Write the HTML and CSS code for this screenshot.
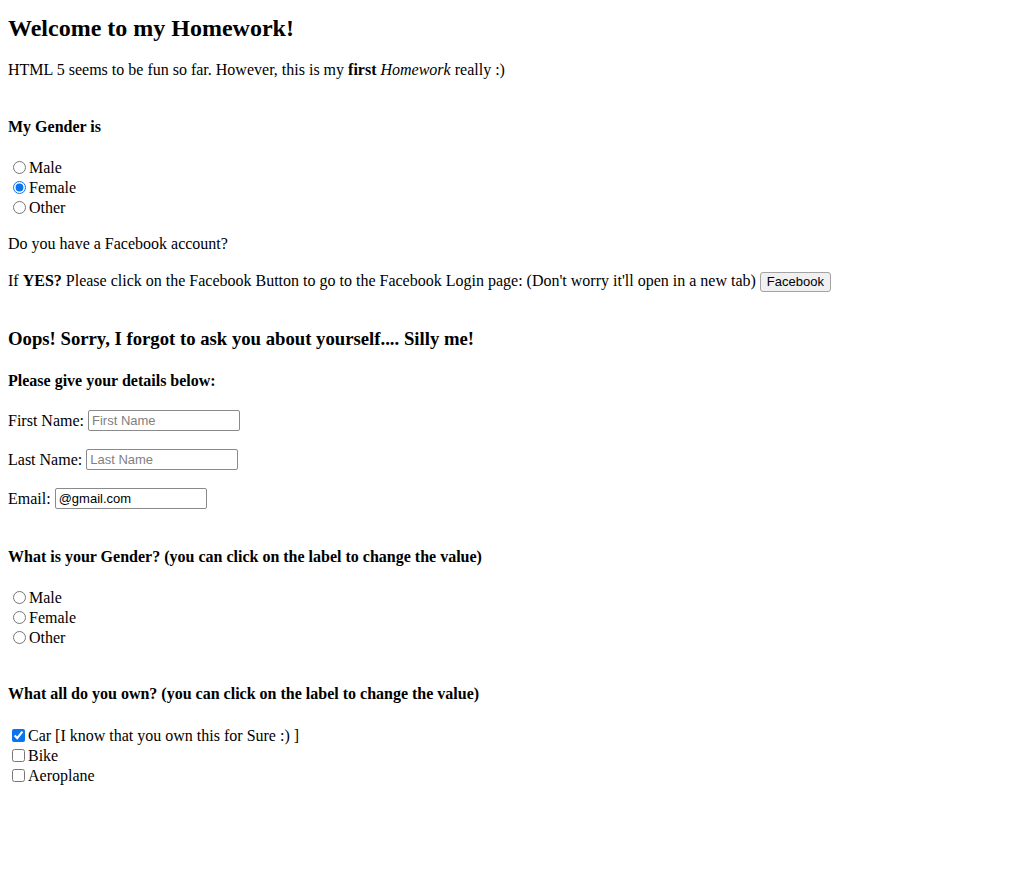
FILE: index.html
```html
<!DOCTYPE html>
<html lang="en">
<head>
<meta charset="utf-8">
<title>My Homework</title>
<link rel="stylesheet" href="styles.css">
</head>
<body>
<h1 class="title">Welcome to my Homework!</h1>
<p class="intro">HTML 5 seems to be fun so far. However, this is my <b>first</b> <i>Homework</i> really :)</p>

<h4 class="heading h-gender1">My Gender is</h4>
<div class="choices ch-gender1">
  <label class="choice"><input class="radio" type="radio" name="g1">Male</label>
  <label class="choice"><input class="radio" type="radio" name="g1" checked>Female</label>
  <label class="choice"><input class="radio" type="radio" name="g1">Other</label>
</div>

<p class="line fb-q">Do you have a Facebook account?</p>
<p class="line fb-line">If <b>YES?</b> Please click on the Facebook Button to go to the Facebook Login page: (Don't worry it'll open in a new tab) <button class="btn" type="button">Facebook</button></p>

<h3 class="subtitle">Oops! Sorry, I forgot to ask you about yourself.... Silly me!</h3>
<h4 class="heading h-details">Please give your details below:</h4>

<div class="field f-first">First Name: <input class="text" type="text" placeholder="First Name"></div>
<div class="field f-last">Last Name: <input class="text" type="text" placeholder="Last Name"></div>
<div class="field f-email">Email: <input class="text" type="email" value="@gmail.com"></div>

<h4 class="heading h-gender2">What is your Gender? (you can click on the label to change the value)</h4>
<div class="choices ch-gender2">
  <label class="choice"><input class="radio" type="radio" name="g2">Male</label>
  <label class="choice"><input class="radio" type="radio" name="g2">Female</label>
  <label class="choice"><input class="radio" type="radio" name="g2">Other</label>
</div>

<h4 class="heading h-own">What all do you own? (you can click on the label to change the value)</h4>
<div class="choices ch-own">
  <label class="choice"><input class="check" type="checkbox" checked>Car [I know that you own this for Sure :) ]</label>
  <label class="choice"><input class="check" type="checkbox">Bike</label>
  <label class="choice"><input class="check" type="checkbox">Aeroplane</label>
</div>
</body>
</html>
```

FILE: styles.css
```css
html, body {
  margin: 0;
  padding: 0;
  background: #ffffff;
}

body {
  padding: 1px 8px 0;
  font-family: "Liberation Serif", "Times New Roman", serif;
  font-size: 16px;
  line-height: 20px;
  color: #000000;
}

.title {
  margin: 13px 0 0;
  font-size: 24px;
  line-height: 28px;
  font-weight: bold;
}

.intro {
  margin: 18px 0 0;
}

.heading {
  margin: 0;
  font-size: 16px;
  font-weight: bold;
  line-height: 20px;
}

.h-gender1 { margin-top: 37px; }
.h-details { margin-top: 21px; }
.h-gender2 { margin-top: 38px; }
.h-own { margin-top: 36px; }

.choices {
  display: flex;
  flex-direction: column;
}

.ch-gender1 { margin-top: 21px; }
.ch-gender2 { margin-top: 21px; }
.ch-own { margin-top: 22px; }

.choice {
  display: flex;
  align-items: center;
  height: 20px;
  line-height: 20px;
  cursor: default;
}

.radio {
  width: 13px;
  height: 13px;
  margin: 0 3px 2px 5px;
  accent-color: #0a74f0;
}

.check {
  width: 13px;
  height: 13px;
  margin: 0 3px 2px 4px;
  accent-color: #0a74f0;
}

.line {
  margin: 0;
}

.fb-q { margin-top: 16px; }
.fb-line { margin-top: 17px; }

.btn {
  box-sizing: border-box;
  height: 20px;
  padding: 0 6px;
  margin: 0;
  font-family: "Liberation Sans", Arial, sans-serif;
  font-size: 13px;
  line-height: 16px;
  color: #000000;
  background: #f0f0f0;
  border: 1px solid #a3a3a3;
  border-radius: 3px;
}

.subtitle {
  margin: 36px 0 0;
  font-size: 18.72px;
  line-height: 22px;
  font-weight: bold;
}

.field {
  line-height: 21px;
}

.f-first { margin-top: 19px; }
.f-last { margin-top: 18px; }
.f-email { margin-top: 18px; }

.text {
  box-sizing: border-box;
  width: 152px;
  height: 21px;
  margin: 0;
  padding: 1px 3px;
  vertical-align: top;
  font-family: "Liberation Sans", Arial, sans-serif;
  font-size: 13px;
  color: #000000;
  background: #ffffff;
  border: 1px solid #8a8a8a;
  border-radius: 2px;
}

.text::placeholder {
  color: #808080;
}
```
